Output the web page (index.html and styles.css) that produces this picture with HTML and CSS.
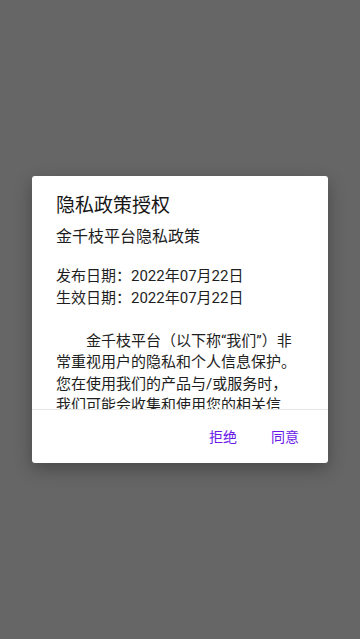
FILE: index.html
```html
<!DOCTYPE html>
<html lang="zh-CN">
<head>
<meta charset="utf-8">
<meta name="viewport" content="width=360, initial-scale=1">
<title>隐私政策授权</title>
<link rel="stylesheet" href="styles.css">
</head>
<body>
<div class="overlay">
  <div class="dialog">
    <div class="title">隐私政策授权</div>
    <div class="subtitle">金千枝平台隐私政策</div>
    <div class="content">
      <p class="line">发布日期：2022年07月22日</p>
      <p class="line">生效日期：2022年07月22日</p>
      <p class="para">金千枝平台（以下称“我们”）非常重视用户的隐私和个人信息保护。您在使用我们的产品与/或服务时，我们可能会收集和使用您的相关信息。我们希望通过本《隐私政策》向您说明我们在您使用我们的产品与/或服务时如何收集、使用、保存、共享和转让这些信息，以及我们为您提供的访问、更新、删除和保护这些信息的方式。</p>
    </div>
    <div class="actions">
      <button class="btn" type="button">拒绝</button>
      <button class="btn" type="button">同意</button>
    </div>
  </div>
</div>
</body>
</html>
```
FILE: styles.css
```css
html, body {
  margin: 0;
  padding: 0;
}
body {
  background: #666666;
  font-family: Roboto, "Noto Sans CJK SC", sans-serif;
  color: #1e1e1e;
}
.overlay {
  width: 360px;
  height: 639px;
  display: flex;
  align-items: center;
  justify-content: center;
}
.dialog {
  width: 296px;
  background: #ffffff;
  border-radius: 3px;
  box-shadow: 0 6px 18px rgba(0, 0, 0, 0.3);
  display: flex;
  flex-direction: column;
}
.title {
  padding: 18px 24px 0;
  font-size: 19px;
  line-height: 24px;
  color: #161616;
}
.subtitle {
  margin-top: 8px;
  padding: 0 24px;
  font-size: 16px;
  line-height: 22px;
}
.content {
  height: 143px;
  padding: 18px 30px 0 24px;
  overflow: hidden;
  font-size: 15px;
  line-height: 21.5px;
}
.content p {
  margin: 0;
}
.para {
  margin-top: 21.5px !important;
  text-indent: 2em;
}
.actions {
  border-top: 1px solid #e6e6e6;
  height: 53px;
  display: flex;
  justify-content: flex-end;
  align-items: center;
  gap: 34px;
  padding-right: 29px;
}
.btn {
  border: 0;
  background: none;
  padding: 0;
  font-family: inherit;
  font-size: 14px;
  line-height: 20px;
  color: #6a1be8;
}
```
